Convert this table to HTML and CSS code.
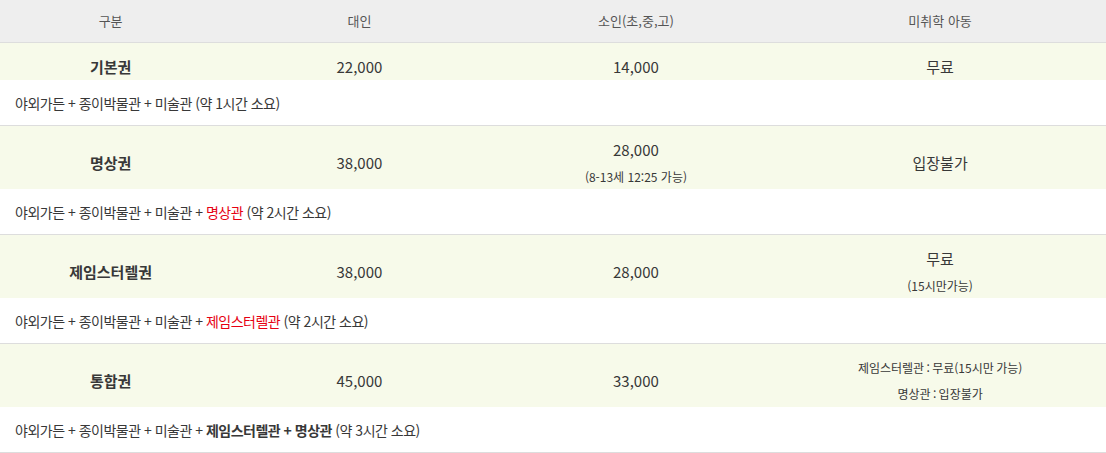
FILE: index.html
```html
<!DOCTYPE html>
<html lang="ko">
<head>
  <meta charset="UTF-8">
  <meta name="viewport" content="width=device-width, initial-scale=1.0">
  <title>관람요금</title>
  <link rel="stylesheet" href="styles.css">
</head>
<body>
  <table class="price-table">
    <colgroup>
      <col class="c1">
      <col class="c2">
      <col class="c3">
      <col class="c4">
    </colgroup>
    <thead>
      <tr>
        <th>구분</th>
        <th>대인</th>
        <th>소인(초,중,고)</th>
        <th>미취학 아동</th>
      </tr>
    </thead>
    <tbody>
      <tr class="price">
        <td class="name">기본권</td>
        <td>22,000</td>
        <td>14,000</td>
        <td>무료</td>
      </tr>
      <tr class="desc">
        <td colspan="4">야외가든 + 종이박물관 + 미술관 (약 1시간 소요)</td>
      </tr>

      <tr class="price">
        <td class="name">명상권</td>
        <td>38,000</td>
        <td>28,000<span class="sub">(8-13세 12:25 가능)</span></td>
        <td>입장불가</td>
      </tr>
      <tr class="desc">
        <td colspan="4">야외가든 + 종이박물관 + 미술관 + <em>명상관</em> (약 2시간 소요)</td>
      </tr>

      <tr class="price">
        <td class="name">제임스터렐권</td>
        <td>38,000</td>
        <td>28,000</td>
        <td>무료<span class="sub">(15시만가능)</span></td>
      </tr>
      <tr class="desc">
        <td colspan="4">야외가든 + 종이박물관 + 미술관 + <em>제임스터렐관</em> (약 2시간 소요)</td>
      </tr>

      <tr class="price">
        <td class="name">통합권</td>
        <td>45,000</td>
        <td>33,000</td>
        <td class="small">
          <span class="line">제임스터렐관 : 무료(15시만 가능)</span>
          <span class="line">명상관 : 입장불가</span>
        </td>
      </tr>
      <tr class="desc">
        <td colspan="4">야외가든 + 종이박물관 + 미술관 + <b>제임스터렐관 + 명상관</b> (약 3시간 소요)</td>
      </tr>
    </tbody>
  </table>
</body>
</html>
```

FILE: styles.css
```css
body {
  margin: 0;
  padding: 0;
  font-family: "Noto Sans CJK KR", "Noto Sans", sans-serif;
  color: #383838;
  background: #fff;
}
.price-table {
  width: 100%;
  border-collapse: collapse;
  table-layout: fixed;
}
.c1 { width: 20%; }
.c2 { width: 25%; }
.c3 { width: 25%; }
.c4 { width: 30%; }
th {
  background: #eeeeee;
  color: #555;
  font-size: 13px;
  font-weight: normal;
  line-height: 20px;
  padding: 11px 0;
  border-bottom: 1px solid #dddddd;
}
.price td {
  background: #f7faea;
  text-align: center;
  vertical-align: middle;
  font-size: 15px;
  line-height: 20px;
  padding: 14px 0 3px;
}
.price .name { font-weight: bold; }
.price .sub {
  display: block;
  font-size: 12px;
  line-height: 18px;
  margin-top: 8px;
}
.price .small .line {
  display: block;
  font-size: 12px;
  line-height: 20px;
  word-spacing: -1px;
}
.price .small .line + .line { margin-top: 6px; }
.desc td {
  font-size: 14px;
  letter-spacing: -0.5px;
  line-height: 20px;
  padding: 13px 15px 12px;
  text-align: left;
  border-bottom: 1px solid #dddddd;
}
.desc em {
  font-style: normal;
  color: #e60012;
}
.desc b { font-weight: bold; }
```
